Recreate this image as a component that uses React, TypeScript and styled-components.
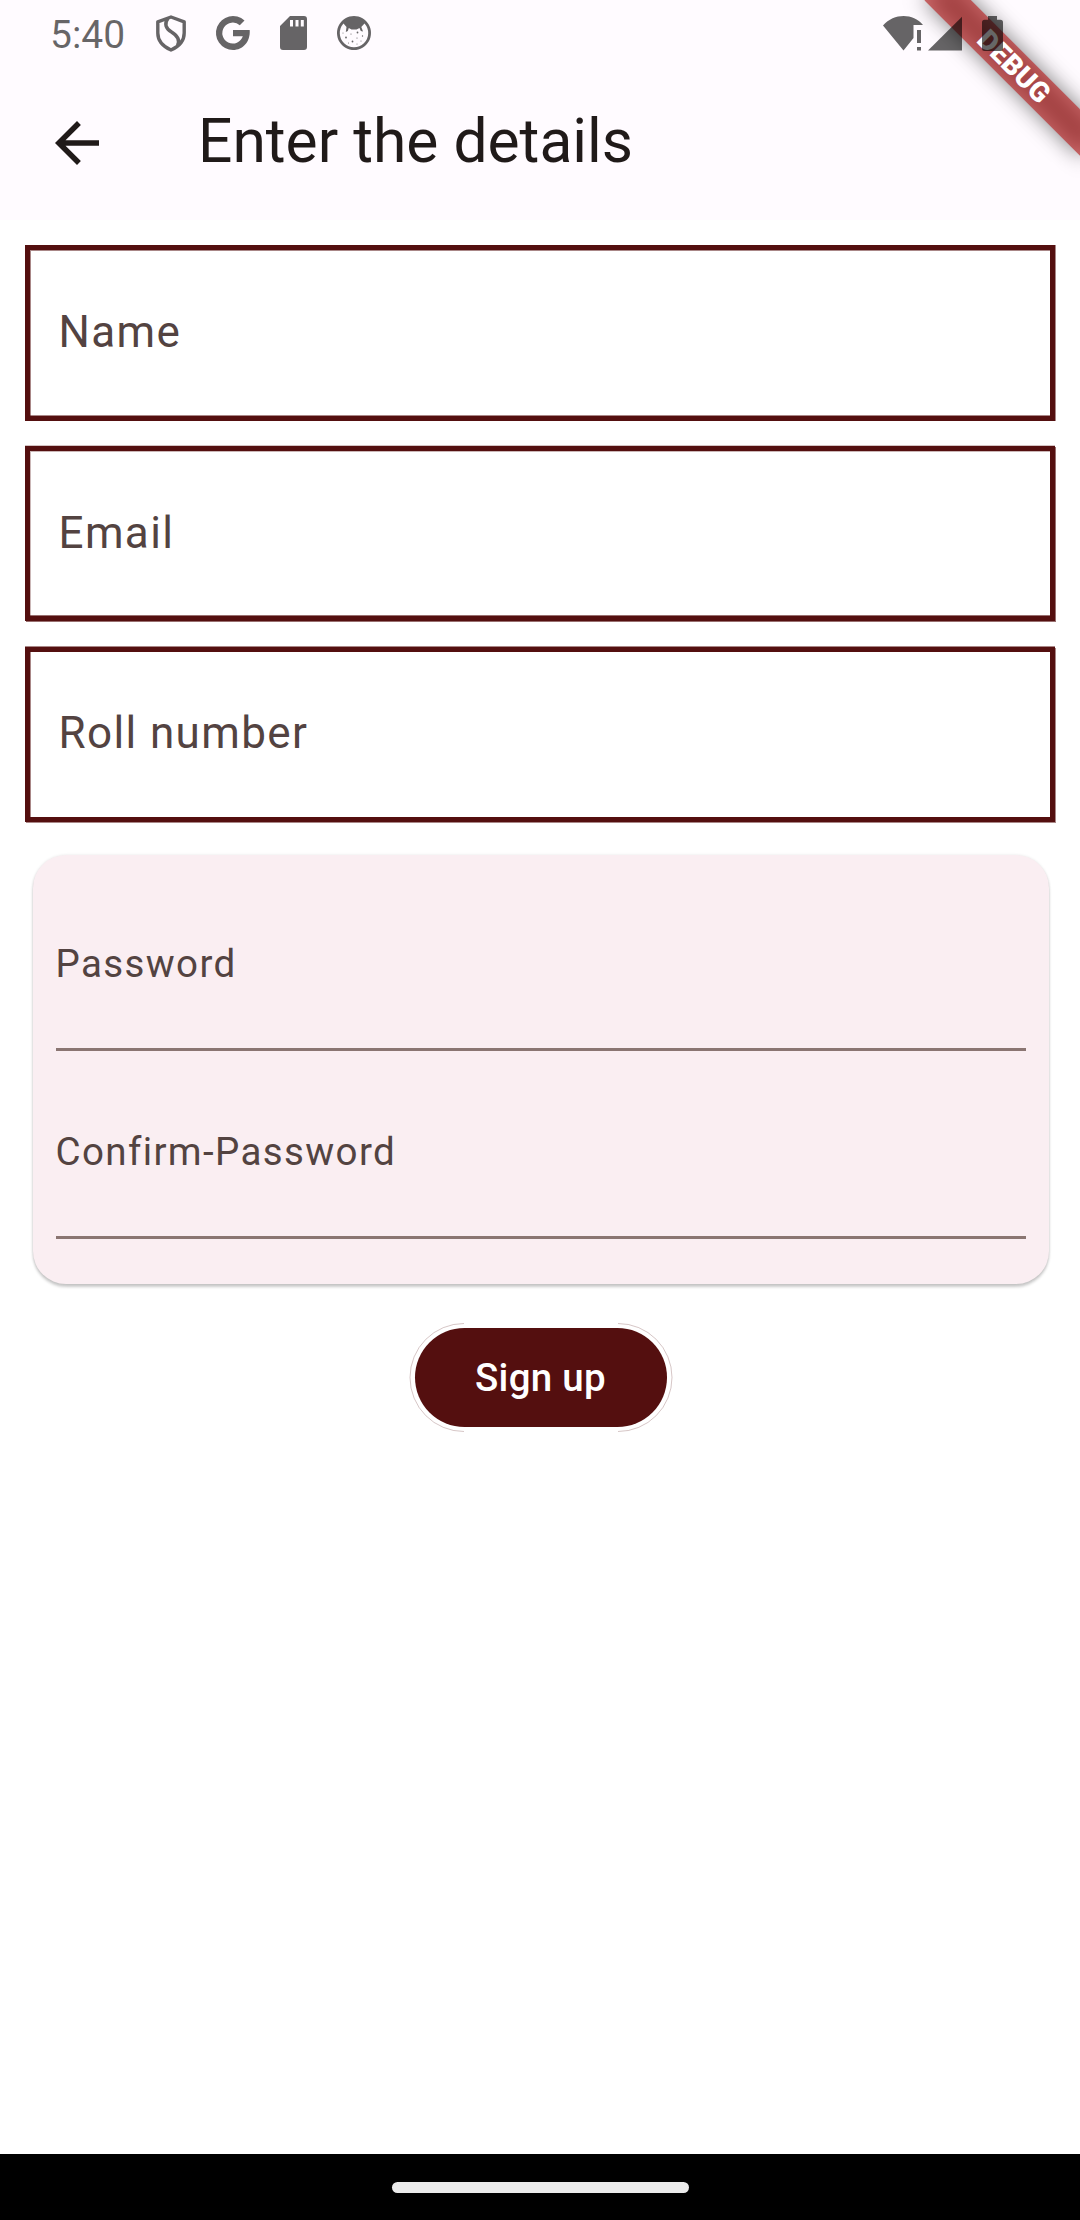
import React from "react";
import styled, { createGlobalStyle } from "styled-components";

const ink = "rgba(0, 0, 0, 0.6)";
const maroon = "#540f0f";
const label = "#534341";

const GlobalStyle = createGlobalStyle`
  body { margin: 0; background: #fff; }
  * { box-sizing: border-box; }
`;

const Screen = styled.div`
  position: relative;
  display: flex;
  flex-direction: column;
  width: 1080px;
  height: 2220px;
  overflow: hidden;
  background: #fff;
  font-family: Roboto, "Liberation Sans", sans-serif;
`;

const Header = styled.header`
  height: 220px;
  background: #fffbff;
`;

const StatusBar = styled.div`
  position: relative;
  z-index: 2;
  display: flex;
  justify-content: space-between;
  height: 66px;
  padding: 0 77px 0 50px;
`;

const StatusGroup = styled.div<{ $gap: number }>`
  display: flex;
  align-items: center;
  gap: ${(p) => p.$gap}px;
  height: 66px;
`;

const Clock = styled.span`
  width: 76px;
  padding-top: 4px;
  color: ${ink};
  font-size: 39px;
  line-height: 46px;
`;

const Glyph = styled.svg`
  display: block;
  flex: none;
  overflow: visible;
`;

const AppBar = styled.div`
  display: flex;
  align-items: center;
  gap: 88px;
  height: 154px;
  padding-left: 44px;
`;

const BackButton = styled.button`
  display: flex;
  padding: 0;
  border: 0;
  background: none;
`;

const Title = styled.h1`
  margin: 0;
  padding-bottom: 3px;
  color: #201a19;
  font-size: 60.5px;
  font-weight: 400;
  line-height: 71px;
`;

const Ribbon = styled.div`
  position: absolute;
  z-index: 1;
  top: 49.5px;
  right: -44px;
  width: 220px;
  height: 33px;
  transform: rotate(45deg);
  &::before {
    content: "";
    position: absolute;
    inset: 0;
    background: rgba(0, 0, 0, 0.5);
    filter: blur(10.9px);
  }
`;

const RibbonText = styled.div`
  position: relative;
  height: 33px;
  background: rgba(183, 28, 28, 0.627);
  color: #fff;
  font-size: 28px;
  font-weight: 900;
  line-height: 33px;
  text-align: center;
`;

const Form = styled.main`
  display: flex;
  flex: 1;
  flex-direction: column;
  align-items: center;
  padding: 25px 24px 0 25px;
`;

const OutlinedField = styled.div<{ $edge: string; $height: number; $pad: number; $after: number }>`
  width: 1030px;
  height: ${(p) => p.$height}px;
  margin: 0 1px ${(p) => p.$after}px 0;
  padding: ${(p) => p.$pad}px 28.500px 0;
  border: 5px solid ${maroon};
  box-shadow: ${(p) => p.$edge};
  color: ${label};
  font-size: 44px;
  line-height: 52px;
  letter-spacing: 1.375px;
`;

const Card = styled.section`
  width: 1016px;
  height: 429px;
  padding: 22px 23px;
  border-radius: 33px;
  background: #faeef2;
  box-shadow: 0 3px 3px rgba(0, 0, 0, 0.2), 0 0 3px rgba(0, 0, 0, 0.1);
`;

const LineField = styled.div<{ $height: number; $pad: number }>`
  height: ${(p) => p.$height}px;
  padding-top: ${(p) => p.$pad}px;
  border-bottom: 3px solid #8a7572;
  color: ${label};
  font-size: 38.5px;
  line-height: 47px;
  letter-spacing: 1.375px;
`;

const SignUp = styled.button`
  position: relative;
  width: 252px;
  height: 99px;
  margin-top: 44px;
  padding: 0;
  border: 0;
  border-radius: 50px;
  background: ${maroon};
  color: #fff;
  font-family: inherit;
  font-size: 38.5px;
  font-weight: 500;
  letter-spacing: 0.275px;
`;

const Halo = styled.svg`
  position: absolute;
  top: -5px;
  left: -5px;
  overflow: visible;
`;

const NavBar = styled.footer`
  display: flex;
  align-items: center;
  justify-content: center;
  height: 66px;
  background: #000;
`;

const Handle = styled.div`
  width: 297px;
  height: 11px;
  border-radius: 6px;
  background: #ebebeb;
`;

const tint = (a: number) => `rgba(84, 15, 15, ${a})`;

const fields = [
  { name: "Name", height: 176, pad: 56, after: 25, edge: `inset 1px 1px ${tint(0.5)}, inset 0 -1px ${tint(0.5)}, 1px 0 ${tint(0.5)}` },
  { name: "Email", height: 175, pad: 56, after: 26, edge: `inset 1px 1px ${tint(0.3)}, inset 0 -1px ${tint(0.6)}, 1px 1px ${tint(0.6)}, 0 -1px ${tint(0.25)}` },
  { name: "Roll number", height: 175, pad: 55, after: 33, edge: `inset 1px 0 ${tint(0.5)}, 1px 1px ${tint(0.5)}, 0 -1px ${tint(0.5)}` },
];

const Shield = () => (
  <Glyph width="30" height="37" viewBox="0 0 30 37" fill="none" stroke={ink} strokeWidth="3.4">
    <path d="M15 2 L28.2 6.8 V18 C28.2 25.500 23 31.500 15 35 C7 31.500 1.800 25.500 1.800 18 V6.800 Z M12 3.500 C8 8.500 9.500 13.500 15.500 17 C22 21 24 25.500 21.500 30.500" strokeLinejoin="round" />
  </Glyph>
);

const LetterG = () => (
  <Glyph width="34" height="34" viewBox="0 0 34 34" fill={ink}>
    <path d="M17 14 H33.700 C34.600 25.500 27 34 17 34 A17 17 0 1 1 28.500 4.500 L23.800 9.200 A10.500 10.500 0 1 0 26.800 20.300 H17 Z" />
  </Glyph>
);

const SdCard = () => (
  <Glyph width="27" height="34" viewBox="0 0 27 34" fill={ink} fillRule="evenodd">
    <path d="M10 0 H24 Q27 0 27 3 V31 Q27 34 24 34 H3 Q0 34 0 31 V10 Z M10 4 V10.500 H13 V4 Z M15.500 4 V10.500 H18.500 V4 Z M20.800 4 V10.500 H23.800 V4 Z" />
  </Glyph>
);

const Face = () => (
  <Glyph width="34" height="34" viewBox="0 0 34 34" fill={ink}>
    <path fillRule="evenodd" d="M17 0 A17 17 0 1 1 16.990 0 Z M6.500 7.500 A14.200 14.200 0 1 0 27.500 7.500 L24.300 11 L26 15.500 L23.800 15 L22.500 12 L19.500 13.500 H14.500 L11.800 12 L10.800 15 L8.800 16 L9.500 11 Z" />
    <g>
      <circle cx="9" cy="21.500" r="0.900" /><circle cx="14" cy="18" r="0.600" />
      <circle cx="20.500" cy="16.500" r="0.900" /><circle cx="15.500" cy="25.500" r="0.900" />
      <circle cx="20" cy="22" r="0.600" /><circle cx="25.500" cy="20" r="0.700" />
      <circle cx="11.500" cy="27" r="0.500" /><circle cx="20" cy="28" r="0.500" />
      <circle cx="24" cy="25" r="0.500" /><circle cx="6" cy="17" r="0.500" />
    </g>
  </Glyph>
);

const Connectivity = () => (
  <Glyph width="79" height="35" viewBox="0 0 79 35" fill={ink}>
    <path d="M0 9.500 C11 -3 30 -3 40 9 H30.500 V22 L20.500 34.500 Z" />
    <path d="M34 14 H38 V27 H34 Z M34 31 H38 V34.500 H34 Z" />
    <path d="M45 34.500 L79 0.700 V34.500 Z" />
  </Glyph>
);

const Battery = () => (
  <Glyph width="21" height="35" viewBox="0 0 21 35" fill={ink}>
    <path d="M6 0 H15 V3.700 H18.500 Q21 3.700 21 6.200 V32.500 Q21 35 18.500 35 H2.500 Q0 35 0 32.500 V6.200 Q0 3.700 2.500 3.700 H6 Z" />
  </Glyph>
);

export default function App() {
  return (
    <Screen>
      <GlobalStyle />
      <Ribbon><RibbonText>DEBUG</RibbonText></Ribbon>
      <Header>
        <StatusBar>
          <StatusGroup $gap={30}>
            <Clock>5:40</Clock>
            <Shield />
            <LetterG />
            <SdCard />
            <Face />
          </StatusGroup>
          <StatusGroup $gap={20}>
            <Connectivity />
            <Battery />
          </StatusGroup>
        </StatusBar>
        <AppBar>
          <BackButton aria-label="Back">
            <Glyph width="66" height="66" viewBox="0 0 24 24" fill="#201a19">
              <path d="M20 11H7.830l5.590-5.590L12 4l-8 8 8 8 1.410-1.410L7.830 13H20v-2z" />
            </Glyph>
          </BackButton>
          <Title>Enter the details</Title>
        </AppBar>
      </Header>
      <Form>
        {fields.map((f) => (
          <OutlinedField key={f.name} $edge={f.edge} $height={f.height} $pad={f.pad} $after={f.after}>
            {f.name}
          </OutlinedField>
        ))}
        <Card>
          <LineField $height={174} $pad={63}>Password</LineField>
          <LineField $height={188} $pad={77}>Confirm-Password</LineField>
        </Card>
        <SignUp>
          <Halo width="262" height="109" viewBox="0 0 262 109" fill="none" stroke={tint(0.3)} strokeWidth="0.8">
            <path d="M54 0.500 A54 54 0 0 0 54 108.500 M208 0.500 A54 54 0 0 1 208 108.500" />
          </Halo>
          Sign up
        </SignUp>
      </Form>
      <NavBar><Handle /></NavBar>
    </Screen>
  );
}
